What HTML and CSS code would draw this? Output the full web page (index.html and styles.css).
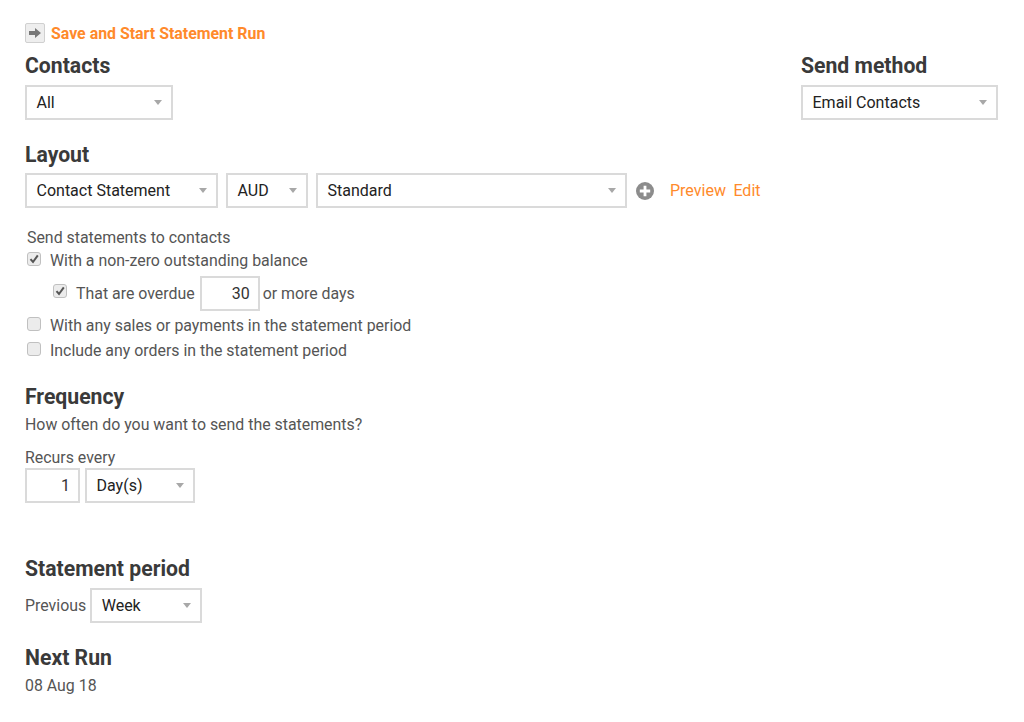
FILE: index.html
```html
<!DOCTYPE html>
<html lang="en">
<head>
<meta charset="utf-8">
<title>Statement Run</title>
<link rel="stylesheet" href="styles.css">
</head>
<body>
<main class="page">
  <div class="save-row">
    <span class="save-icon"><svg width="12" height="10" viewBox="0 0 12 10"><path d="M0 3h6V0l6 5-6 5V7H0z" fill="#777"/></svg></span>
    <a class="link save-link">Save and Start Statement Run</a>
  </div>

  <div class="top-row">
    <section>
      <h2 class="heading">Contacts</h2>
      <div class="select w-contacts"><span>All</span><i class="caret"></i></div>
    </section>
    <section>
      <h2 class="heading">Send method</h2>
      <div class="select w-method"><span>Email Contacts</span><i class="caret"></i></div>
    </section>
  </div>

  <section class="layout-section">
    <h2 class="heading">Layout</h2>
    <div class="layout-row">
      <div class="select w-statement"><span>Contact Statement</span><i class="caret"></i></div>
      <div class="select w-aud"><span>AUD</span><i class="caret"></i></div>
      <div class="select w-standard"><span>Standard</span><i class="caret"></i></div>
      <svg class="plus" width="18" height="18" viewBox="0 0 18 18"><circle cx="9" cy="9" r="9" fill="#8c8c8c"/><path d="M7.6 3.8h2.8v3.8h3.8v2.8h-3.8v3.8H7.6v-3.8H3.8V7.6h3.8z" fill="#fff"/></svg>
      <a class="link preview">Preview</a>
      <a class="link edit">Edit</a>
    </div>
  </section>

  <section class="criteria">
    <div class="criteria-title">Send statements to contacts</div>
    <div class="check-row r1"><span class="check on"><svg width="10" height="10" viewBox="0 0 10 10"><path d="M1.5 5.2 4 8l4.8-6.6" fill="none" stroke="#555" stroke-width="2"/></svg></span>With a non-zero outstanding balance</div>
    <div class="check-row nested"><span class="check on"><svg width="10" height="10" viewBox="0 0 10 10"><path d="M1.5 5.2 4 8l4.8-6.6" fill="none" stroke="#555" stroke-width="2"/></svg></span>That are overdue<span class="field w-days">30</span>or more days</div>
    <div class="check-row r3"><span class="check"></span>With any sales or payments in the statement period</div>
    <div class="check-row r4"><span class="check"></span>Include any orders in the statement period</div>
  </section>

  <section class="frequency">
    <h2 class="heading">Frequency</h2>
    <p class="text how">How often do you want to send the statements?</p>
    <p class="text recurs">Recurs every</p>
    <div class="recur-row">
      <span class="field w-num">1</span>
      <div class="select w-day"><span>Day(s)</span><i class="caret"></i></div>
    </div>
  </section>

  <section class="period">
    <h2 class="heading">Statement period</h2>
    <div class="period-row">
      <span class="text">Previous</span>
      <div class="select w-week"><span>Week</span><i class="caret"></i></div>
    </div>
  </section>

  <section class="next">
    <h2 class="heading">Next Run</h2>
    <p class="text next-date">08 Aug 18</p>
  </section>
</main>
</body>
</html>
```
FILE: styles.css
```css
* { box-sizing: border-box; }
html, body { margin: 0; padding: 0; background: #fff; }
body { font-family: Roboto, "Liberation Sans", sans-serif; font-size: 15.9px; color: #555; height: 722px; overflow: hidden; }
.page { padding: 23px 26px 0 25px; }

.link { color: #ff8a2b; }
.heading { margin: 0; padding-top: 1px; height: 24px; font-size: 21.2px; line-height: 24px; font-weight: 700; color: #3a3a3a; }
.text { margin: 0; font-size: 15.9px; line-height: 18px; color: #555; }

.save-row { display: flex; align-items: center; height: 20px; gap: 6px; }
.save-icon { width: 20px; height: 20px; display: flex; align-items: center; justify-content: center; background: #eee; border: 1px solid #d0d0d0; border-radius: 2px; }
.save-link { font-size: 15.9px; font-weight: 700; }

.top-row { display: flex; justify-content: space-between; margin-top: 10px; }

.select { position: relative; display: flex; align-items: center; height: 35px; padding-left: 9.5px; border: 2px solid #dadada; background: #fff; color: #222; font-size: 16px; }
.caret { position: absolute; right: 9px; top: 13px; width: 0; height: 0; border-left: 4.5px solid transparent; border-right: 4.5px solid transparent; border-top: 5px solid #a8a8a8; }
.top-row .heading { margin-bottom: 8px; }

.w-contacts { width: 148px; }
.w-method { width: 197px; }
.w-statement { width: 193px; }
.w-aud { width: 82px; }
.w-standard { width: 311px; }
.w-day { width: 110px; }
.w-week { width: 112px; }

.layout-section { margin-top: 22px; }
.layout-row { display: flex; align-items: center; gap: 8px; margin-top: 7px; }
.plus { margin-left: 1px; }
.preview { margin-left: 8px; font-size: 16px; }
.edit { font-size: 16px; margin-left: -0.5px; }

.criteria { margin-top: 21px; padding-left: 2px; color: #555; }
.criteria-title { line-height: 18px; }
.check-row { display: flex; align-items: center; line-height: 18px; }
.r1 { margin-top: 5px; }
.nested { margin-top: 6px; padding-left: 26px; height: 35px; }
.r3 { margin-top: 6px; }
.r4 { margin-top: 7px; }
.check { width: 14px; height: 14px; margin-right: 9px; margin-top: -4px; display: flex; align-items: center; justify-content: center; background: #ececec; border: 1px solid #c0c0c0; border-radius: 3px; flex: none; }
.nested .check { margin-top: -6px; }

.field { display: flex; align-items: center; justify-content: flex-end; height: 35px; padding-right: 8px; border: 2px solid #dadada; background: #fff; color: #333; font-size: 16px; }
.w-days { width: 60px; margin: 0 3px 0 5px; }
.w-num { width: 55px; height: 35px; }

.frequency { margin-top: 24px; }
.how { margin-top: 8px; }
.recurs { margin-top: 15px; }
.recur-row { display: flex; gap: 5px; margin-top: 1px; }

.period { margin-top: 53px; }
.period-row { display: flex; align-items: center; gap: 4px; margin-top: 8px; }

.next { margin-top: 22px; }
.next-date { margin-top: 8px; }
```
